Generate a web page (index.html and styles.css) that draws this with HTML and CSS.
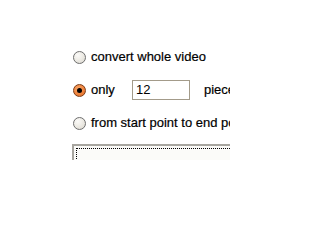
FILE: index.html
```html
<!DOCTYPE html>
<html>
<head>
<meta charset="utf-8">
<link rel="stylesheet" href="styles.css">
</head>
<body>
<div class="panel">
  <div class="row">
    <span class="radio"></span>
    <span class="label">convert whole video</span>
  </div>
  <div class="row">
    <span class="radio checked"></span>
    <span class="label only">only</span>
    <span class="field">12</span>
    <span class="label pieces">pieces</span>
  </div>
  <div class="row">
    <span class="radio"></span>
    <span class="label">from start point to end point</span>
  </div>
  <div class="box"><div class="focus"></div></div>
</div>
</body>
</html>
```
FILE: styles.css
```css
html, body {
  margin: 0;
  padding: 0;
  background: #ffffff;
}
body {
  width: 300px;
  height: 206px;
  overflow: hidden;
  font-family: "Liberation Sans", Arial, sans-serif;
  font-size: 13px;
  color: #000000;
}
.panel {
  margin-left: 72px;
  padding-top: 46px;
  width: 158px;
  overflow: hidden;
  display: flex;
  flex-direction: column;
  gap: 11px;
}
.row {
  display: flex;
  align-items: center;
  height: 22px;
  white-space: nowrap;
}
.radio {
  flex: none;
  width: 11px;
  height: 11px;
  margin-left: 1px;
  border: 1px solid #6e6e6e;
  border-radius: 50%;
  background: radial-gradient(circle at 35% 30%, #fbfaf8 0%, #eeece6 45%, #d9d6cd 100%);
  position: relative;
}
.radio.checked {
  border-color: #7c3c16;
  background: radial-gradient(circle at 40% 35%, #f8a86a 0%, #f0843e 55%, #d9661f 100%);
}
.radio.checked::after {
  content: "";
  position: absolute;
  left: 3px;
  top: 3px;
  width: 5px;
  height: 5px;
  border-radius: 50%;
  background: #000;
}
.label {
  flex: none;
  margin-left: 5px;
  line-height: 22px;
  -webkit-text-stroke: 0.2px #000;
}
.only {
  width: 41px;
}
.field {
  flex: none;
  box-sizing: border-box;
  width: 58px;
  height: 20px;
  border: 1px solid #a39b8a;
  padding-left: 3px;
  line-height: 18px;
  background: #fff;
}
.pieces {
  margin-left: 14px;
}
.box {
  flex: none;
  margin-top: -1px;
  height: 16px;
  box-sizing: border-box;
  border-top: 2px solid #a7a59f;
  border-left: 2px solid #a7a59f;
  background: #fbfbf9;
  padding: 2px 0 0 2px;
}
.focus {
  height: 12px;
  border-top: 1px dotted #000;
  border-left: 1px dotted #000;
}
```
